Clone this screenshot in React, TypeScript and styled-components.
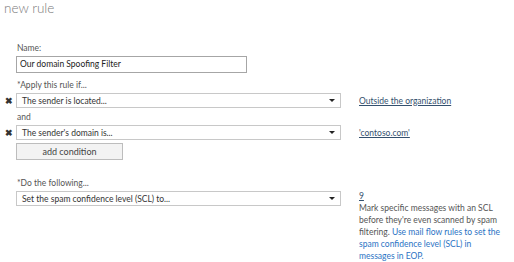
import styled, { createGlobalStyle } from 'styled-components';

const GlobalStyle = createGlobalStyle`
    body {
        margin: 0;
        background: #ffffff;
        font-family: "Lato", "Liberation Sans", sans-serif;
    }
`

const Page = styled.div`
    width: 514px;
    height: 262px;
    overflow: hidden;
    padding: 0;
    box-sizing: border-box;
`

const Title = styled.h1`
    margin: 0 0 0 4px;
    font-size: 13.5px;
    line-height: 16px;
    font-weight: 300;
    color: #7a7a7a;
`

const Form = styled.div`
    display: grid;
    grid-template-columns: 16px 325px 18px 150px;
    margin-top: 27px;
`

const Label = styled.div<{ top?: number }>`
    grid-column: 2;
    font-size: 8.5px;
    line-height: 11px;
    color: #555;
    margin-top: ${(props) => props.top ?? 0}px;
    margin-bottom: 2px;
    padding-left: 1px;
`

const Remove = styled.div`
    grid-column: 1;
    font-size: 9px;
    font-weight: 700;
    color: #333;
    padding-left: 5px;
    align-self: center;
    line-height: 10px;
`

const TextBox = styled.div`
    grid-column: 2 / span 1;
    width: 231px;
    height: 17px;
    border: 1px solid #a6a6a6;
    box-sizing: border-box;
    font-size: 8.5px;
    line-height: 15px;
    padding-left: 3px;
    color: #222;
`

const Select = styled.div`
    grid-column: 2;
    align-self: start;
    height: 15px;
    border: 1px solid #c8c8c8;
    box-sizing: border-box;
    display: flex;
    align-items: center;
    justify-content: space-between;
    padding: 0 5px 0 5px;
    font-size: 8.5px;
    color: #333;
`

const Arrow = styled.span`
    width: 0;
    height: 0;
    border-left: 3px solid transparent;
    border-right: 3px solid transparent;
    border-top: 3px solid #222;
`

const SideLink = styled.a`
    grid-column: 4;
    font-size: 8.5px;
    color: #34506e;
    text-decoration: underline;
    align-self: center;
`

const Button = styled.div`
    grid-column: 2;
    width: 107px;
    height: 17px;
    margin-top: 3px;
    border: 1px solid #bdbdbd;
    background: #f3f3f3;
    box-sizing: border-box;
    font-size: 9px;
    line-height: 15px;
    text-align: center;
    color: #444;
`

const Side = styled.p`
    grid-column: 4;
    margin: 0;
    font-size: 8.5px;
    line-height: 12px;
    color: #555;
`

const Num = styled.a`
    display: block;
    color: #34506e;
    text-decoration: underline;
    line-height: 11px;
`

const Help = styled.span`
    color: #2a72c4;
`

function App(){
    const rows = [
        { text: "The sender is located...", value: "Outside the organization" },
        { text: "The sender's domain is...", value: "'contoso.com'" },
    ]
    return (
        <Page>
            <GlobalStyle />
            <Title>new rule</Title>
            <Form>
                <Label>Name:</Label>
                <TextBox>Our domain Spoofing Filter</TextBox>
                <Label top={7}>*Apply this rule if...</Label>
                <Remove>✖</Remove>
                <Select>{rows[0].text}<Arrow /></Select>
                <div />
                <SideLink>{rows[0].value}</SideLink>
                <Label top={4}>and</Label>
                <Remove>✖</Remove>
                <Select>{rows[1].text}<Arrow /></Select>
                <div />
                <SideLink>{rows[1].value}</SideLink>
                <Button>add condition</Button>
                <Label top={18}>*Do the following...</Label>
                <div />
                <Select>Set the spam confidence level (SCL) to...<Arrow /></Select>
                <div />
                <Side>
                    <Num>9</Num>
                    Mark specific messages with an SCL before they're even scanned by spam filtering. <Help>Use mail flow rules to set the spam confidence level (SCL) in messages in EOP.</Help>
                </Side>
            </Form>
        </Page>
    )
}

export default App;
